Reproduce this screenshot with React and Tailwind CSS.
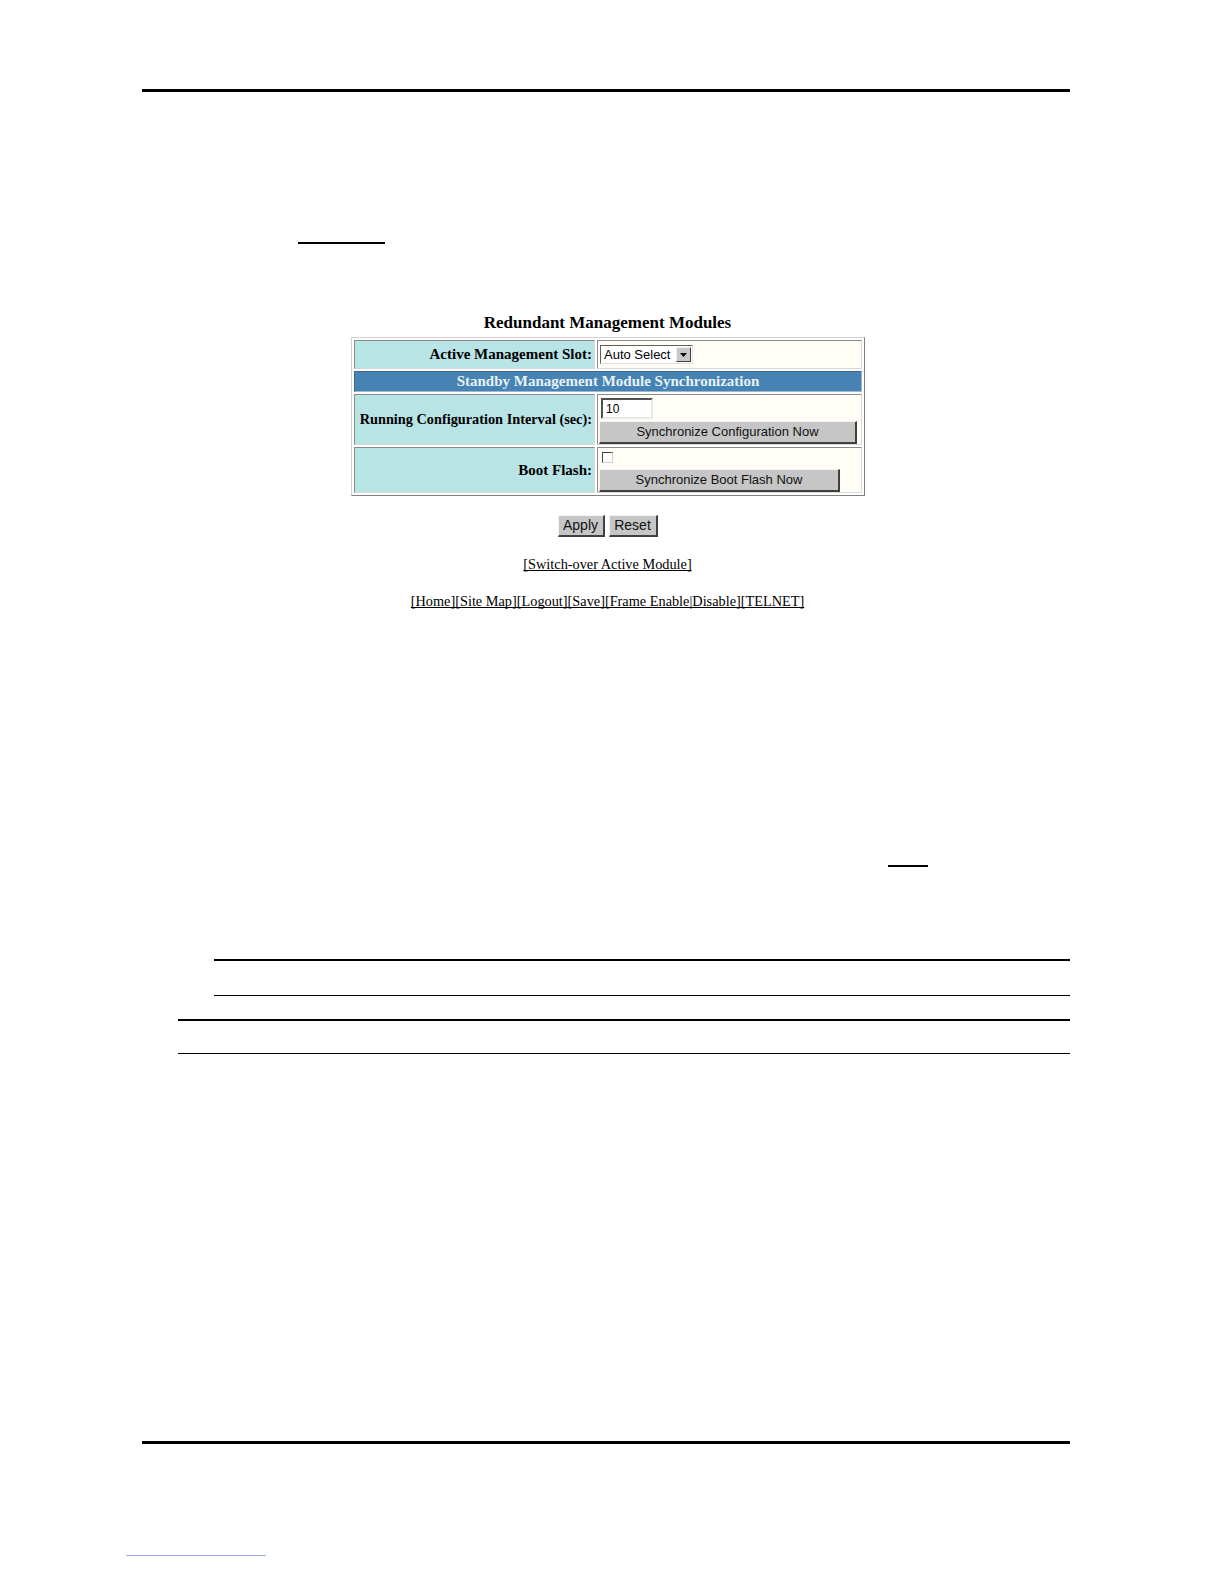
import React from "react";

const serif = { fontFamily: '"Liberation Serif", "Times New Roman", serif' };
const sans = { fontFamily: '"Liberation Sans", Arial, sans-serif' };

function Btn({ children, className = "" }) {
  return (
    <div
      className={
        "flex items-center justify-center bg-[#c6c6c6] text-[13px] text-[#111] border-t border-l border-t-[#f4f4f4] border-l-[#f4f4f4] border-b-2 border-r-2 border-b-[#404040] border-r-[#404040] " +
        className
      }
      style={sans}
    >
      {children}
    </div>
  );
}

export default function App() {
  const cell = "border border-t-[#8a8a8a] border-l-[#8a8a8a] border-b-[#d8d8d8] border-r-[#d8d8d8]";
  return (
    <div className="w-[1224px] h-[1584px] bg-white flex flex-col" style={serif}>
      <div className="shrink-0 mt-[89px] ml-[142px] w-[928px] h-[3px] bg-black" />
      <div className="shrink-0 mt-[150px] ml-[298px] w-[87px] h-[2px] bg-black" />

      <div className="shrink-0 mt-[68px] ml-[142px] w-[931px] text-center text-[17px] font-bold leading-[22px] text-black">
        Redundant Management Modules
      </div>

      <div className="shrink-0 mt-[3px] ml-[351px] w-[514px] border border-t-[#d0d0d0] border-l-[#d0d0d0] border-b-[#808080] border-r-[#808080] p-[2px]">
        <div className="grid grid-cols-[241px_265px] grid-rows-[29px_21px_51px_46px] gap-[2px]">
          <div className={"bg-[#b9e4e6] flex items-center justify-end pr-[2px] text-[15px] font-bold text-black whitespace-nowrap " + cell}>
            Active Management Slot:
          </div>
          <div className={"bg-[#fffdf6] flex items-center pl-[2px] " + cell}>
            <div className="w-[93px] h-[19px] bg-white flex items-center border border-t-[#606060] border-l-[#606060] border-b-[#e0e0e0] border-r-[#e0e0e0]">
              <span className="flex-1 pl-[3px] text-[13px] text-black leading-none" style={sans}>
                Auto Select
              </span>
              <div className="w-[15px] h-[15px] mr-[1px] bg-[#c8c8c8] flex items-center justify-center border-t border-l border-t-[#f0f0f0] border-l-[#f0f0f0] border-b border-r border-b-[#404040] border-r-[#404040]">
                <svg width="7" height="4" viewBox="0 0 7 4">
                  <path d="M0 0 H7 L3.5 4 Z" fill="#000" />
                </svg>
              </div>
            </div>
          </div>

          <div className="col-span-2 bg-[#4682b4] flex items-center justify-center text-[15px] font-bold text-[#e6f3f4] whitespace-nowrap border border-t-[#3a6a94] border-l-[#3a6a94] border-b-[#9ab8d0] border-r-[#9ab8d0]">
            Standby Management Module Synchronization
          </div>

          <div className={"bg-[#b9e4e6] flex items-center justify-end pr-[2px] text-[14.3px] font-bold text-black whitespace-nowrap " + cell}>
            Running Configuration Interval (sec):
          </div>
          <div className={"bg-[#fffdf6] flex flex-col items-start pl-[1px] pt-[3px] " + cell}>
            <div className="ml-[2px] w-[52px] h-[21px] bg-white flex items-center pl-[3px] text-[12px] text-black border-2 border-t-[#505050] border-l-[#505050] border-b-[#e8e8e8] border-r-[#e8e8e8]" style={sans}>
              10
            </div>
            <Btn className="mt-[2px] w-[258px] h-[23px]">Synchronize Configuration Now</Btn>
          </div>

          <div className={"bg-[#b9e4e6] flex items-center justify-end pr-[2px] text-[15px] font-bold text-black whitespace-nowrap " + cell}>
            Boot Flash:
          </div>
          <div className={"bg-[#fffdf6] flex flex-col items-start pl-[1px] pt-[4px] " + cell}>
            <div className="ml-[3px] w-[11px] h-[11px] bg-white border border-t-[#404040] border-l-[#404040] border-b-[#d0d0d0] border-r-[#d0d0d0]" />
            <Btn className="mt-[6px] w-[241px] h-[23px]">Synchronize Boot Flash Now</Btn>
          </div>
        </div>
      </div>

      <div className="shrink-0 mt-[19px] ml-[142px] w-[931px] flex justify-center gap-[4px]">
        <Btn className="w-[47px] h-[22px] text-[14px]">Apply</Btn>
        <Btn className="w-[49px] h-[22px] text-[14px]">Reset</Btn>
      </div>

      <div className="shrink-0 mt-[18px] ml-[142px] w-[931px] text-center text-[14.3px] leading-[18px] text-black">
        <span className="underline [text-decoration-skip-ink:none]">[Switch-over Active Module]</span>
      </div>

      <div className="shrink-0 mt-[19px] ml-[142px] w-[931px] text-center text-[14.3px] leading-[18px] text-black">
        <span className="underline [text-decoration-skip-ink:none]">[Home][Site Map][Logout][Save][Frame Enable|Disable][TELNET]</span>
      </div>

      <div className="shrink-0 mt-[255px] ml-[888px] w-[40px] h-[2px] bg-black" />

      <div className="shrink-0 mt-[92px] ml-[214px] w-[856px] h-[1.5px] bg-black" />
      <div className="shrink-0 mt-[34px] ml-[214px] w-[856px] h-[1.5px] bg-black" />
      <div className="shrink-0 mt-[23px] ml-[178px] w-[892px] h-[1.5px] bg-black" />
      <div className="shrink-0 mt-[32px] ml-[178px] w-[892px] h-[1.5px] bg-black" />

      <div className="shrink-0 mt-[387px] ml-[142px] w-[928px] h-[3px] bg-black" />

      <div className="shrink-0 mt-[111px] ml-[126px] w-[140px] h-[1px] bg-[#9aa8f0]" />
    </div>
  );
}
